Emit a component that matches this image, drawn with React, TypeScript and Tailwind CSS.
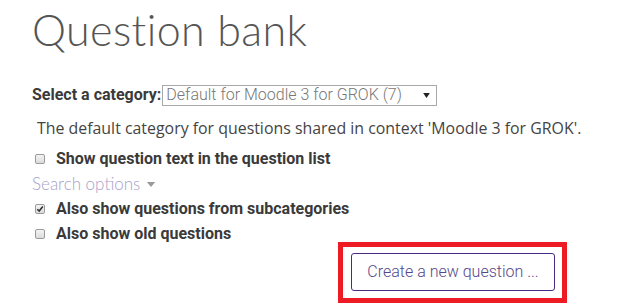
import React from "react";

function Box({ checked }: { checked?: boolean }) {
  return (
    <span className="relative inline-block h-[10px] w-[10px] shrink-0 rounded-[2px] border border-[#9a9a9a] bg-gradient-to-b from-[#f4f4f4] to-[#dcdcdc]">
      {checked && (
        <svg viewBox="0 0 10 10" className="absolute left-[-1px] top-[-1px] h-[10px] w-[10px]">
          <path d="M2.3 5.2 L4.2 7.1 L7.8 2.6" fill="none" stroke="#333" strokeWidth="1.6" />
        </svg>
      )}
    </span>
  );
}

function CheckRow({ label, checked }: { label: string; checked?: boolean }) {
  return (
    <div className="flex h-[25px] items-center">
      <span className="ml-[3px] mr-[11px] flex items-center">
        <Box checked={checked} />
      </span>
      <span className="font-['Roboto'] text-[16px] font-bold text-[#3a3a3a]">{label}</span>
    </div>
  );
}

export default function App() {
  return (
    <div className="h-[306px] w-[644px] overflow-hidden bg-white pl-8">
      <div className="h-[83px] pt-[8px]">
        <h1 className="font-['Lato'] text-[43px] font-light leading-none tracking-[0.4px] text-[#555]">
          Question bank
        </h1>
      </div>
      <div className="flex h-[24px] items-center">
        <span className="font-['Roboto'] text-[16px] font-bold text-[#3a3a3a]">Select a category:</span>
        <div className="relative ml-[1px] flex h-[21px] w-[275px] items-center border border-[#a9a9a9] bg-white pl-[3px]">
          <span className="font-['Roboto'] text-[16px] font-light leading-none text-[#777]">
            Default for Moodle 3 for GROK (7)
          </span>
          <svg viewBox="0 0 8 6" className="absolute right-[6px] top-[7px] h-[5px] w-[7px]">
            <path d="M0 0 L8 0 L4 6 Z" fill="#222" />
          </svg>
        </div>
      </div>
      <div className="mt-[10px] flex h-[24px] items-center pl-[5px] font-['Open_Sans'] text-[15.9px] text-[#444]">
        The default category for questions shared in context 'Moodle 3 for GROK'.
      </div>
      <div className="mt-[5px]">
        <CheckRow label="Show question text in the question list" />
        <div className="flex h-[25px] items-center font-['Lato'] text-[17px] font-light text-[#a89fcb]">
          Search options
          <svg viewBox="0 0 10 6" className="ml-[6px] mt-[1px] h-[5px] w-[10px]">
            <path d="M0 0 L10 0 L5 6 Z" fill="#9a9a9a" />
          </svg>
        </div>
        <CheckRow label="Also show questions from subcategories" checked />
        <div className="h-[21px] overflow-visible">
          <CheckRow label="Also show old questions" />
        </div>
      </div>
      <div className="ml-[306px] w-[229px] border-[5px] border-[#ed1c24] pb-[7px] pl-[8px] pr-[7px] pt-[6px]">
        <button className="flex h-[38px] w-[204px] items-center justify-center rounded-[3px] border border-[#4a2a82] bg-white font-['Roboto'] text-[16px] font-light text-[#54488a]">
          Create a new question ...
        </button>
      </div>
    </div>
  );
}
